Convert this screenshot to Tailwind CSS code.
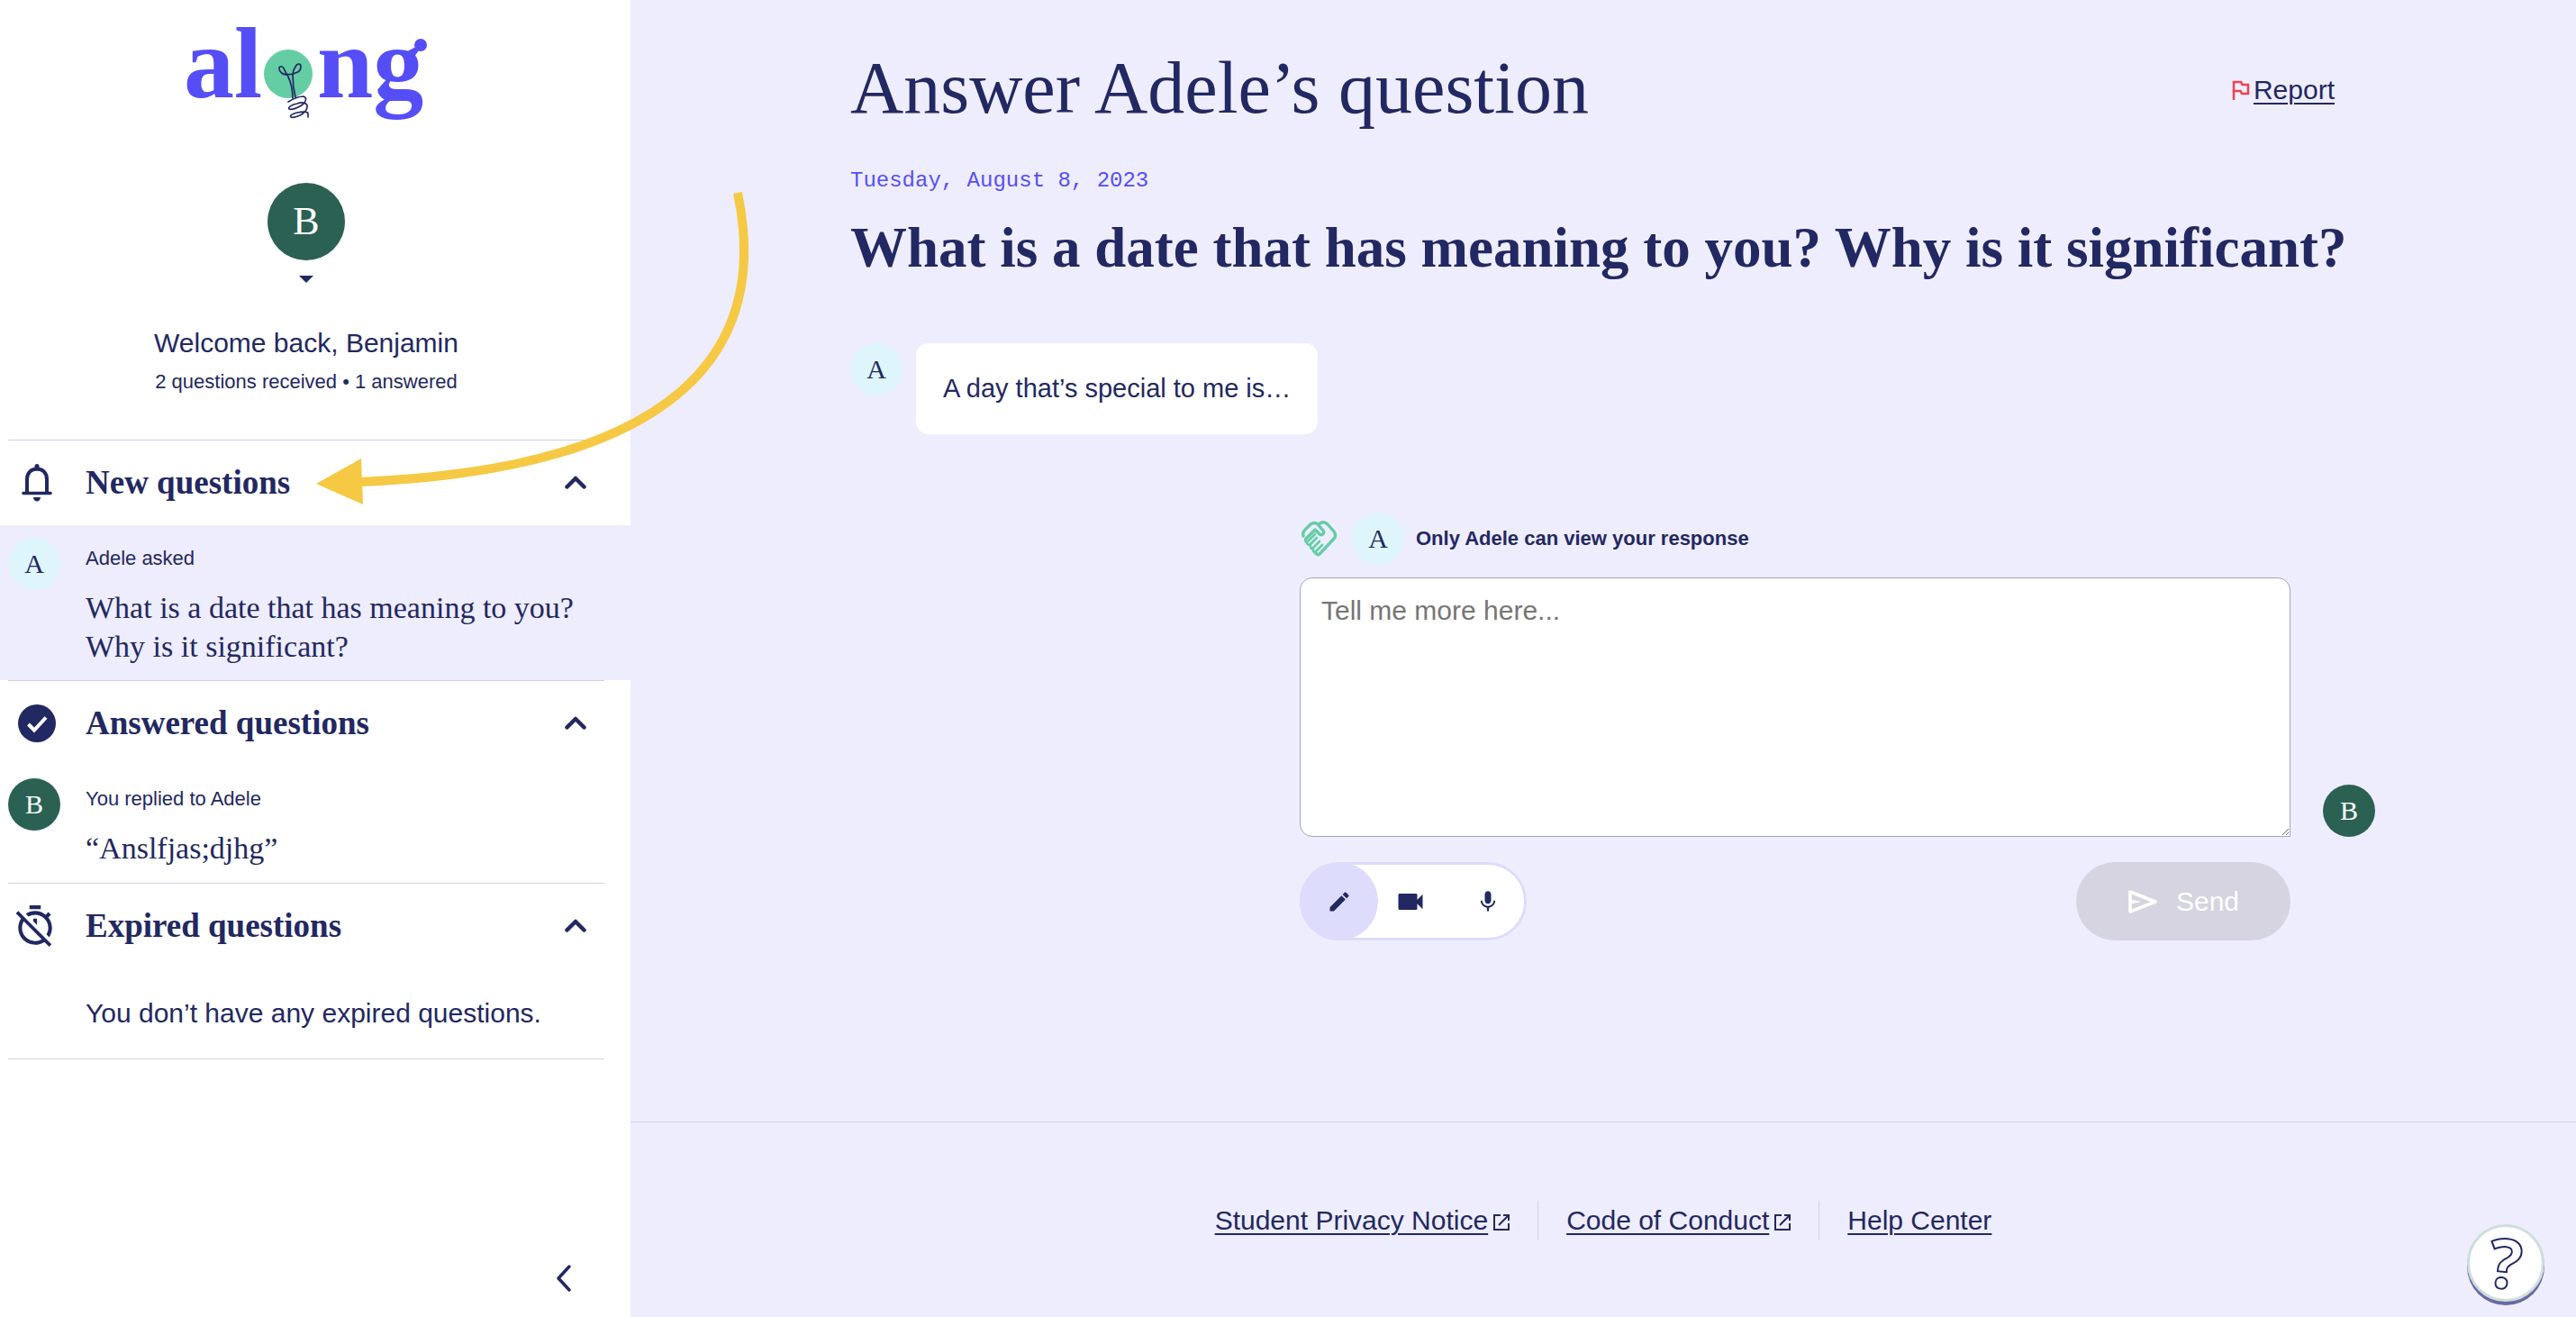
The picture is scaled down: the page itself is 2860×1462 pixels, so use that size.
<!DOCTYPE html>
<html lang="en">
<head>
  <meta charset="UTF-8">
  <meta name="viewport" content="width=device-width, initial-scale=1.0">
  <title>Along - Answer Adele's question</title>
  <script src="https://cdn.jsdelivr.net/npm/@tailwindcss/browser@4"></script>
</head>
<body class="relative flex min-h-screen bg-[#eeedfd] font-['Liberation_Sans',Arial,sans-serif] text-[30px] leading-10 text-[#222861]">

  <!-- Sidebar -->
  <aside class="flex w-[700px] shrink-0 flex-col bg-white">
    <div class="mr-[29px] ml-[9px] flex flex-col items-center">
      <a href="#" aria-label="along">
        <svg class="h-[140px] w-[280px]" viewBox="200 0 280 140" fill="none">
          <g fill="#554ef7" font-family="'Liberation Serif', serif" font-weight="700" font-size="112">
            <text x="204" y="108">al</text>
            <text x="352" y="108">ng</text>
          </g>
          <circle cx="467" cy="50" r="7" fill="#554ef7" />
          <circle cx="320" cy="82" r="27" fill="#64cda4" />
          <g stroke="#222861" stroke-width="1.7" stroke-linecap="round">
            <path d="M325 109c0-9-2-18-6-26-5 0-9-3-9-7 0-3 4-3 5 0 1 2 2 4 3 6 4 1 7 1 10-1 4-1 6-4 6-7 0-4-4-4-6 0-2 3-3 6-3 9 0 8 1 17 3 25" />
            <path d="M320 113c5-3 11-6 17-6 4 1 3 6-1 9-5 4-12 6-15 5-2-2 4-5 9-6 5-2 10-1 11 2 1 4-2 7-6 10-4 2-10 4-12 3-2-2 3-4 7-5 5-1 11-2 12 1v4" />
          </g>
        </svg>
      </a>
      <button class="mt-[63px] flex cursor-pointer flex-col items-center gap-[17px]" aria-label="Account menu">
        <span class="flex size-[86px] items-center justify-center rounded-full bg-[#2a6153] font-['Liberation_Serif',serif] text-[44px] text-white">B</span>
        <svg class="h-2 w-4" viewBox="0 0 16 8" fill="currentColor"><path d="M0 0h16L8 8z" /></svg>
      </button>
      <p class="mt-[47px]">Welcome back, Benjamin</p>
      <p class="mt-[7px] mb-12 text-[22px] leading-8">2 questions received • 1 answered</p>
    </div>

    <section>
      <hr class="mr-[29px] ml-[9px] border-[#d2d1e2]">
      <button class="flex h-[94px] w-full cursor-pointer items-center pr-[49px] text-left">
        <span class="flex w-[95px] shrink-0 pl-6">
          <svg class="h-[42px] w-[34px]" viewBox="0 0 34 42" fill="none" stroke="currentColor" stroke-linecap="round">
            <path d="M6 32V17C6 10 10.500 5.500 17 5.500S28 10 28 17v15" stroke-width="4" />
            <path d="M2 32.500h30" stroke-width="3.500" />
            <path d="M17 5V2.500" stroke-width="5" />
            <path d="M13 37h8c0 2.500-1.800 4.500-4 4.500S13 39.500 13 37z" fill="currentColor" stroke="none" />
          </svg>
        </span>
        <span class="flex-1 font-['Liberation_Serif',serif] text-[37px] font-bold">New questions</span>
        <svg class="h-4 w-6" viewBox="0 0 24 16" fill="none" stroke="currentColor" stroke-width="4.500" stroke-linecap="round" stroke-linejoin="round"><path d="M2.500 12.500 12 3l9.500 9.500" /></svg>
      </button>
      <a href="#" class="flex h-[172px] bg-[#eeedfd] pt-[14px] pl-[9px]">
        <span class="flex size-[58px] shrink-0 items-center justify-center rounded-full bg-[#dff5fc] font-['Liberation_Serif',serif] text-[30px]">A</span>
        <span class="ml-7 pt-[7px]">
          <span class="block text-[22px] leading-8">Adele asked</span>
          <span class="mt-[17px] block font-['Liberation_Serif',serif] text-[34px] leading-[43px]">What is a date that has meaning to you?<br>Why is it significant?</span>
        </span>
      </a>
    </section>

    <section>
      <hr class="mr-[29px] ml-[9px] border-[#d2d1e2]">
      <button class="flex h-[94px] w-full cursor-pointer items-center pr-[49px] text-left">
        <span class="flex w-[95px] shrink-0 pl-5">
          <svg class="size-[42px]" viewBox="0 0 42 42" fill="none">
            <circle cx="21" cy="21" r="21" fill="#222861" />
            <path d="M11.500 22l6.500 6.500 13-14" stroke="#fff" stroke-width="4" />
          </svg>
        </span>
        <span class="flex-1 font-['Liberation_Serif',serif] text-[37px] font-bold">Answered questions</span>
        <svg class="h-4 w-6" viewBox="0 0 24 16" fill="none" stroke="currentColor" stroke-width="4.500" stroke-linecap="round" stroke-linejoin="round"><path d="M2.500 12.500 12 3l9.500 9.500" /></svg>
      </button>
      <a href="#" class="flex h-[130px] pt-[14px] pl-[9px]">
        <span class="flex size-[58px] shrink-0 items-center justify-center rounded-full bg-[#2a6153] font-['Liberation_Serif',serif] text-[30px] text-white">B</span>
        <span class="ml-7 pt-[7px]">
          <span class="block text-[22px] leading-8">You replied to Adele</span>
          <span class="mt-[17px] block font-['Liberation_Serif',serif] text-[34px] leading-[43px]">“Anslfjas;djhg”</span>
        </span>
      </a>
    </section>

    <section>
      <hr class="mr-[29px] ml-[9px] border-[#d2d1e2]">
      <button class="flex h-[94px] w-full cursor-pointer items-center pr-[49px] text-left">
        <span class="flex w-[95px] shrink-0 pl-[14px]">
          <svg class="size-[50px]" viewBox="0 0 24 24" fill="currentColor"><path d="M19.040 4.550l-1.420 1.420C16.070 4.740 14.120 4 12 4c-1.830 0-3.530.55-4.950 1.480l1.460 1.460C9.530 6.350 10.730 6 12 6c3.870 0 7 3.130 7 7 0 1.270-.35 2.470-.94 3.490l1.450 1.450C20.450 16.530 21 14.830 21 13c0-2.120-.74-4.070-1.970-5.610l1.420-1.420-1.410-1.420zM15 1H9v2h6V1zm-4 8.440l2 2V8h-2v1.440zM3.020 4L1.750 5.270 4.500 8.030C3.550 9.450 3 11.160 3 13c0 4.970 4.020 9 9 9 1.840 0 3.550-.55 4.980-1.500l2.500 2.500 1.270-1.270-7.710-7.710L3.020 4zM12 20c-3.870 0-7-3.130-7-7 0-1.280.35-2.480.95-3.520l9.560 9.560c-1.030.61-2.230.96-3.510.96z" /></svg>
        </span>
        <span class="flex-1 font-['Liberation_Serif',serif] text-[37px] font-bold">Expired questions</span>
        <svg class="h-4 w-6" viewBox="0 0 24 16" fill="none" stroke="currentColor" stroke-width="4.500" stroke-linecap="round" stroke-linejoin="round"><path d="M2.500 12.500 12 3l9.500 9.500" /></svg>
      </button>
      <p class="flex h-[100px] items-center pl-[95px]">You don’t have any expired questions.</p>
      <hr class="mr-[29px] ml-[9px] border-[#d2d1e2]">
    </section>

    <button class="mt-auto mr-[62px] mb-[25px] cursor-pointer self-end" aria-label="Collapse sidebar">
      <svg class="h-9 w-6" viewBox="0 0 24 36" fill="none" stroke="currentColor" stroke-width="3.500" stroke-linecap="round" stroke-linejoin="round"><path d="M18 5 6 18l12 13" /></svg>
    </button>
  </aside>

  <!-- Question and reply form -->
  <div class="flex min-w-0 flex-1 flex-col">
    <main class="flex-1 pt-[50px] pr-[223px] pl-[244px]">
      <div class="flex items-center justify-between">
        <h1 class="font-['Liberation_Serif',serif] text-[82px] leading-[96px]">Answer Adele’s question</h1>
        <a href="#" class="mr-[45px] flex items-center gap-1 pt-1">
          <svg class="h-[22px] w-5" viewBox="0 0 20 22" fill="none" stroke="#ee4352" stroke-width="2.500"><path d="M2 22V2h8l1.500 3H18v10h-7l-1.500-3H2" /></svg>
          <span class="underline decoration-2 underline-offset-4">Report</span>
        </a>
      </div>
      <p class="mt-[37px] font-['Liberation_Mono',monospace] text-2xl leading-9 text-[#554ef7]">Tuesday, August 8, 2023</p>
      <h2 class="mt-[18px] font-['Liberation_Serif',serif] text-[63px] leading-[76px] font-bold">What is a date that has meaning to you? Why is it significant?</h2>

      <div class="mt-[68px] flex items-start gap-[15px]">
        <span class="flex size-[58px] shrink-0 items-center justify-center rounded-full bg-[#dff5fc] font-['Liberation_Serif',serif] text-[30px]">A</span>
        <p class="rounded-[14px] bg-white px-[30px] py-[30px] text-[29px] leading-[41px]">A day that’s special to me is…</p>
      </div>

      <form class="mt-[87px] ml-auto w-[1194px] max-w-full">
        <div class="flex items-center">
          <svg class="h-[42px] w-[42px]" viewBox="0 0 42 42" fill="none" stroke="#64cda4" stroke-width="3.400" stroke-linecap="round" stroke-linejoin="round">
            <path d="M4 18c-1-3 0-5 2-7l6-6c3-2 6-2 8 0l6 7c2 3-1 6-4 4l-5-5L7 21" />
            <path d="M21 5c3-3 7-3 10 0l7 8c2 3 2 6 0 8L22 38c-1 1-2 1-3 0l-2-2" />
            <path d="M7 21c-2 2 0 5 2 3l8-8M9 24c-2 2 0 5 3 3l7-7M12 28c-1 3 1 5 3 3l7-7M15 32c-1 3 1 5 3 3l7-7" stroke-width="2.600" />
          </svg>
          <span class="ml-4 flex size-[58px] items-center justify-center rounded-full bg-[#dff5fc] font-['Liberation_Serif',serif] text-[30px]">A</span>
          <label for="response" class="ml-[13px] text-[22px] leading-8 font-bold">Only Adele can view your response</label>
        </div>
        <div class="mt-[14px] flex items-end gap-9">
          <textarea id="response" placeholder="Tell me more here..." class="h-[288px] min-w-0 flex-1 resize rounded-[14px] rounded-br-none border border-[#a5a4c6] bg-white px-[23px] py-4 placeholder:text-[#757575]"></textarea>
          <span class="flex size-[58px] shrink-0 items-center justify-center rounded-full bg-[#2a6153] font-['Liberation_Serif',serif] text-[30px] text-white">B</span>
        </div>
        <div class="mt-7 mr-[94px] flex items-center justify-between">
          <div class="flex h-[87px] w-[252px] items-center rounded-full border-[3px] border-[#dddcfd] bg-white" role="group" aria-label="Response type">
            <button type="button" class="-m-[3px] flex size-[87px] shrink-0 cursor-pointer items-center justify-center rounded-full bg-[#dddcfd]" aria-label="Write">
              <svg class="size-7" viewBox="0 0 24 24" fill="currentColor"><path d="M3 17.250V21h3.750L17.810 9.940l-3.750-3.750L3 17.250zM20.710 7.040c.39-.39.39-1.020 0-1.410l-2.340-2.340c-.39-.39-1.020-.39-1.410 0l-1.830 1.830 3.750 3.750 1.830-1.830z" /></svg>
            </button>
            <button type="button" class="ml-[3px] flex h-full w-[72px] shrink-0 cursor-pointer items-center justify-center" aria-label="Record video">
              <svg class="size-9" viewBox="0 0 24 24" fill="currentColor"><path d="M17 10.500V7c0-.55-.45-1-1-1H4c-.55 0-1 .45-1 1v10c0 .55.45 1 1 1h12c.55 0 1-.45 1-1v-3.500l4 4v-11l-4 4z" /></svg>
            </button>
            <button type="button" class="ml-auto flex h-full w-20 shrink-0 cursor-pointer items-center justify-center" aria-label="Record audio">
              <svg class="size-7" viewBox="0 0 24 24" fill="currentColor"><path d="M12 14c1.660 0 2.990-1.340 2.990-3L15 5c0-1.660-1.340-3-3-3S9 3.340 9 5v6c0 1.660 1.340 3 3 3zm5.300-3c0 3-2.540 5.100-5.300 5.100S6.700 14 6.700 11H5c0 3.410 2.720 6.230 6 6.720V21h2v-3.280c3.280-.48 6-3.300 6-6.720h-1.700z" /></svg>
            </button>
          </div>
          <button type="submit" disabled class="flex h-[87px] w-[238px] items-center justify-center gap-5 rounded-full bg-[#d5d4e0] text-white">
            <svg class="h-7 w-[34px]" viewBox="0 0 34 28" fill="none" stroke="currentColor" stroke-linejoin="round">
              <path d="M3 3v22l28-11z" stroke-width="3.600" />
              <path d="M4 11.500 15 14 4 16.500z" fill="currentColor" stroke="none" />
            </svg>
            Send
          </button>
        </div>
      </form>
    </main>

    <footer class="border-t border-[#d2d1e2] pt-[87px] pb-[85px]">
      <nav class="flex h-11 items-center justify-center">
        <a href="#" class="flex items-center gap-[6px]">
          <span class="underline decoration-2 underline-offset-4">Student Privacy Notice</span>
          <svg class="mt-1 size-[18px]" viewBox="0 0 18 18" fill="none" stroke="currentColor" stroke-width="2"><path d="M8 1H1v16h16v-7M11 1h6v6M17 1 6 12" /></svg>
        </a>
        <span class="mx-[31px] h-full w-px bg-[#d2d1e2]"></span>
        <a href="#" class="flex items-center gap-[6px]">
          <span class="underline decoration-2 underline-offset-4">Code of Conduct</span>
          <svg class="mt-1 size-[18px]" viewBox="0 0 18 18" fill="none" stroke="currentColor" stroke-width="2"><path d="M8 1H1v16h16v-7M11 1h6v6M17 1 6 12" /></svg>
        </a>
        <span class="mx-[31px] h-full w-px bg-[#d2d1e2]"></span>
        <a href="#" class="underline decoration-2 underline-offset-4">Help Center</a>
      </nav>
    </footer>
  </div>

  <!-- Arrow pointing at the new questions -->
  <svg class="pointer-events-none absolute top-[200px] left-[340px] h-[380px] w-[510px]" viewBox="340 200 510 380" fill="none">
    <path d="M819 214C862 420 706 522 400 535" stroke="#f5c944" stroke-width="10" />
    <path d="M351 537l50-28 2 51z" fill="#f5c944" />
  </svg>

  <button class="fixed right-[35px] bottom-[17px] flex size-[86px] cursor-pointer items-center justify-center rounded-full border-[3px] border-[#cfdedc] bg-white shadow-[0_4px_0_#6c69a5]" aria-label="Help">
    <svg class="size-28 shrink-0" viewBox="0 0 112 112">
      <text x="56" y="84" text-anchor="middle" transform="rotate(6 56 56)" font-family="'Open Sans', sans-serif" font-weight="700" font-size="76" fill="#fff" stroke="#222861" stroke-width="2">?</text>
    </svg>
  </button>
</body>
</html>
